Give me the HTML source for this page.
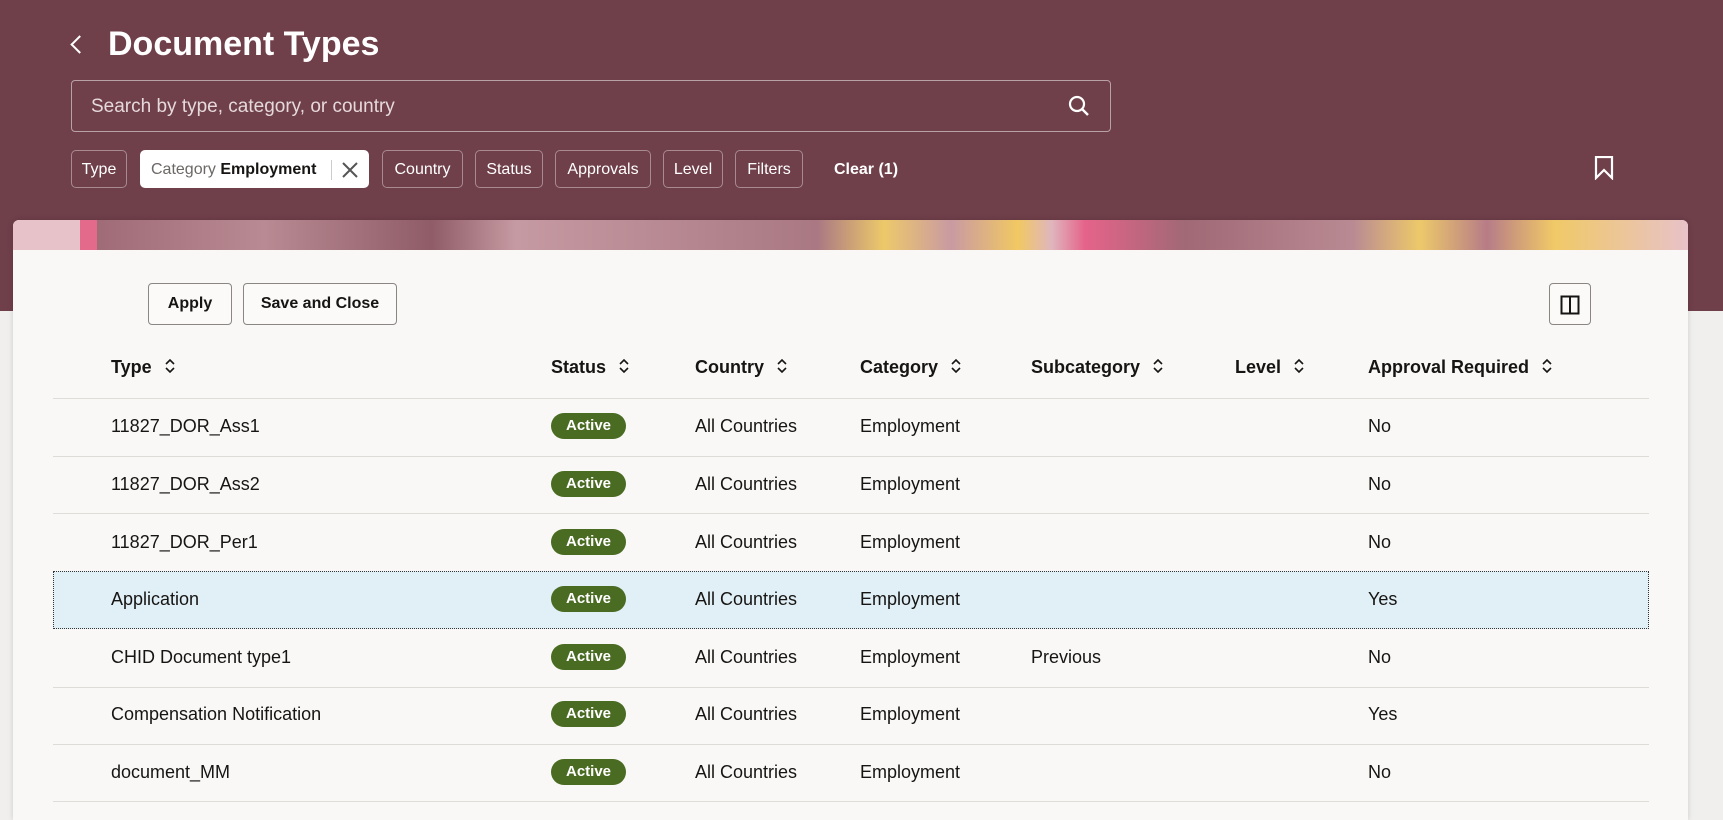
<!DOCTYPE html>
<html><head><meta charset="utf-8"><style>
*{box-sizing:border-box;margin:0;padding:0}
body{width:1723px;height:802px;overflow:hidden;background:#f0efed;font-family:"Liberation Sans",sans-serif;position:relative;color:#161513}
.hdr{position:absolute;left:0;top:0;width:1723px;height:311px;background:#6f3f4a}
.back{position:absolute;left:73px;top:38px;width:13px;height:13px;border-left:2.5px solid #fff;border-bottom:2.5px solid #fff;transform:rotate(45deg)}
.title{position:absolute;left:108px;top:25px;color:#fff;font-size:34px;font-weight:bold}
.search{position:absolute;left:71px;top:80px;width:1040px;height:52px;border:1px solid #b9a2a7;border-radius:4px;color:#e6d9dc;font-size:19px;padding:15px 0 0 19px}
.chip{position:absolute;top:150px;height:38px;border:1px solid #a88a91;border-radius:5px;color:#fff;font-size:16px;line-height:38px;text-align:center}
.chip.w{background:#fff;color:#161513;border-color:#fff;text-align:left;padding-left:10px}
.clear{position:absolute;left:834px;top:161px;color:#fff;font-weight:bold;font-size:16px}
.card{position:absolute;left:13px;top:220px;width:1675px;height:600px;background:#f9f8f6;border-radius:6px 6px 0 0;overflow:hidden;box-shadow:0 0 6px rgba(0,0,0,.15)}
.band{height:30px;background:linear-gradient(90deg,#e7c3c9 0,#e7c3c9 4%,#e36a8a 4%,#e36a8a 5%,#9f6b77 5%,#b98a93 15%,#8f5c67 25%,#c69aa2 30%,#a97883 48%,#edc96a 52%,#c99aa2 56%,#f1c863 60%,#dfb6bd 62%,#e5638a 64%,#a06975 70%,#b98a93 80%,#edc96a 84%,#b77c87 88%,#f0c967 92%,#e8c2c8 100%)}
.btn{position:absolute;top:63px;height:42px;border:1px solid #8a8683;border-radius:4px;background:#fbfaf9;font-size:16px;font-weight:bold;line-height:40px;text-align:center}
.th{position:absolute;top:137px;font-size:18px;font-weight:bold}
.th svg{margin-left:12px;vertical-align:-1px}
.line{position:absolute;left:40px;width:1596px;height:1px;background:#dedcd9}
.cell{position:absolute;font-size:18px}
.badge{position:absolute;left:538px;width:75px;height:26px;border-radius:13px;background:#4a6b22;color:#fff;font-size:15px;font-weight:bold;text-align:center;line-height:26px}
.sel{position:absolute;left:40px;top:351px;width:1596px;height:58px;background:#e1eff6;border:1px dotted #333}
</style></head><body>
<div class="hdr"></div>
<div class="back"></div>
<div class="title">Document Types</div>
<div class="search">Search by type, category, or country
<svg style="position:absolute;right:20px;top:14px" width="22" height="22" viewBox="0 0 22 22"><circle cx="9" cy="9" r="7" fill="none" stroke="#fff" stroke-width="2.2"/><path d="M14 14l6 6" stroke="#fff" stroke-width="2.4"/></svg></div>
<div class="chip" style="left:71px;width:56px">Type</div>
<div class="chip w" style="left:140px;width:229px"><span style="color:#6b6866">Category</span> <b>Employment</b><span style="position:absolute;left:190px;top:9px;height:20px;border-left:1px solid #ccc"></span><svg style="position:absolute;left:200px;top:10px" width="18" height="18"><path d="M2 2L16 16M16 2L2 16" stroke="#555" stroke-width="2"/></svg></div>
<div class="chip" style="left:382px;width:81px">Country</div>
<div class="chip" style="left:475px;width:68px">Status</div>
<div class="chip" style="left:555px;width:96px">Approvals</div>
<div class="chip" style="left:663px;width:60px">Level</div>
<div class="chip" style="left:735px;width:68px">Filters</div>
<div class="clear">Clear (1)</div>
<svg style="position:absolute;left:1594px;top:156px" width="20" height="24"><path d="M2 1H18V22L10 14L2 22Z" fill="none" stroke="#fff" stroke-width="2.2"/></svg>
<div class="card">
<div class="band"></div>
<div class="btn" style="left:135px;width:84px">Apply</div>
<div class="btn" style="left:230px;width:154px">Save and Close</div>
<div class="btn" style="left:1536px;width:42px"><svg style="margin-top:11px" width="20" height="20"><rect x="1.5" y="1.5" width="17" height="17" fill="none" stroke="#161513" stroke-width="2"/><path d="M10 1.5V18.5" stroke="#161513" stroke-width="2"/></svg></div>
<div class="th" style="left:98px">Type<svg width="12" height="16"><path d="M2 6L6 2L10 6M2 10L6 14L10 10" fill="none" stroke="#161513" stroke-width="1.6"/></svg></div>
<div class="th" style="left:538px">Status<svg width="12" height="16"><path d="M2 6L6 2L10 6M2 10L6 14L10 10" fill="none" stroke="#161513" stroke-width="1.6"/></svg></div>
<div class="th" style="left:682px">Country<svg width="12" height="16"><path d="M2 6L6 2L10 6M2 10L6 14L10 10" fill="none" stroke="#161513" stroke-width="1.6"/></svg></div>
<div class="th" style="left:847px">Category<svg width="12" height="16"><path d="M2 6L6 2L10 6M2 10L6 14L10 10" fill="none" stroke="#161513" stroke-width="1.6"/></svg></div>
<div class="th" style="left:1018px">Subcategory<svg width="12" height="16"><path d="M2 6L6 2L10 6M2 10L6 14L10 10" fill="none" stroke="#161513" stroke-width="1.6"/></svg></div>
<div class="th" style="left:1222px">Level<svg width="12" height="16"><path d="M2 6L6 2L10 6M2 10L6 14L10 10" fill="none" stroke="#161513" stroke-width="1.6"/></svg></div>
<div class="th" style="left:1355px">Approval Required<svg width="12" height="16"><path d="M2 6L6 2L10 6M2 10L6 14L10 10" fill="none" stroke="#161513" stroke-width="1.6"/></svg></div>
<div class="line" style="top:178px"></div>
<div class="sel"></div>
<div class="line" style="top:236px"></div>
<div class="line" style="top:293px"></div>
<div class="line" style="top:467px"></div>
<div class="line" style="top:524px"></div>
<div class="line" style="top:581px"></div>

<div class="cell" style="left:98px;top:196px">11827_DOR_Ass1</div><div class="badge" style="top:193px">Active</div><div class="cell" style="left:682px;top:196px">All Countries</div><div class="cell" style="left:847px;top:196px">Employment</div><div class="cell" style="left:1355px;top:196px">No</div>
<div class="cell" style="left:98px;top:254px">11827_DOR_Ass2</div><div class="badge" style="top:251px">Active</div><div class="cell" style="left:682px;top:254px">All Countries</div><div class="cell" style="left:847px;top:254px">Employment</div><div class="cell" style="left:1355px;top:254px">No</div>
<div class="cell" style="left:98px;top:312px">11827_DOR_Per1</div><div class="badge" style="top:309px">Active</div><div class="cell" style="left:682px;top:312px">All Countries</div><div class="cell" style="left:847px;top:312px">Employment</div><div class="cell" style="left:1355px;top:312px">No</div>
<div class="cell" style="left:98px;top:369px">Application</div><div class="badge" style="top:366px">Active</div><div class="cell" style="left:682px;top:369px">All Countries</div><div class="cell" style="left:847px;top:369px">Employment</div><div class="cell" style="left:1355px;top:369px">Yes</div>
<div class="cell" style="left:98px;top:427px">CHID Document type1</div><div class="badge" style="top:424px">Active</div><div class="cell" style="left:682px;top:427px">All Countries</div><div class="cell" style="left:847px;top:427px">Employment</div><div class="cell" style="left:1018px;top:427px">Previous</div><div class="cell" style="left:1355px;top:427px">No</div>
<div class="cell" style="left:98px;top:484px">Compensation Notification</div><div class="badge" style="top:481px">Active</div><div class="cell" style="left:682px;top:484px">All Countries</div><div class="cell" style="left:847px;top:484px">Employment</div><div class="cell" style="left:1355px;top:484px">Yes</div>
<div class="cell" style="left:98px;top:542px">document_MM</div><div class="badge" style="top:539px">Active</div><div class="cell" style="left:682px;top:542px">All Countries</div><div class="cell" style="left:847px;top:542px">Employment</div><div class="cell" style="left:1355px;top:542px">No</div>
</div>
</body></html>
